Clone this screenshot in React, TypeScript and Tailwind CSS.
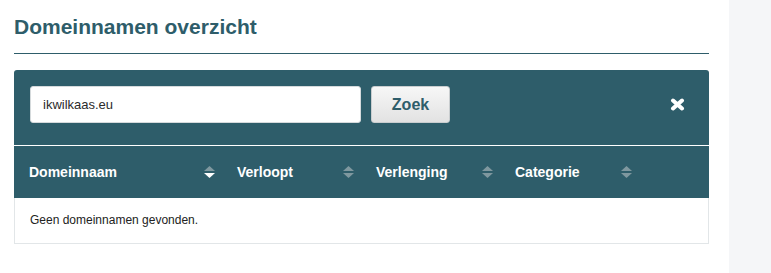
import React from "react";

function SortIcon({ active }: { active?: boolean }) {
  return (
    <svg width="11" height="12" viewBox="0 0 11 12" className="shrink-0">
      <polygon points="5.5,0 11,5 0,5" fill="#7f989f" />
      <polygon points="0,7 11,7 5.5,12" fill={active ? "#ffffff" : "#7f989f"} />
    </svg>
  );
}

export default function App() {
  const cols = [
    { label: "Domeinnaam", active: true },
    { label: "Verloopt" },
    { label: "Verlenging" },
    { label: "Categorie" },
  ];
  return (
    <div
      className="flex min-h-screen w-full bg-white"
      style={{ fontFamily: '"Liberation Sans", Arial, sans-serif' }}
    >
      <div className="w-[729px] shrink-0 pl-[14px] pr-[20px]">
        <h1 className="mt-[15px] text-[21px] font-bold leading-[24px] text-[#2e5d6a]">
          Domeinnamen overzicht
        </h1>
        <div className="mt-[14px] h-px bg-[#2e5d6a]" />
        <div className="mt-[16px] rounded-t-[3px] bg-[#2e5d6a]">
          <div className="flex items-center pl-[16px] pr-[24px] pt-[16px] pb-[22px]">
            <div className="flex h-[37px] w-[331px] items-center rounded-[3px] border border-[#d5dadc] bg-white pl-[12px] text-[13px] text-[#2b2b2b]">
              ikwilkaas.eu
            </div>
            <button className="ml-[10px] flex h-[37px] w-[79px] items-center justify-center rounded-[3px] border border-[#c9cdcf] bg-gradient-to-b from-[#f7f7f7] to-[#e2e2e2] text-[16px] font-bold text-[#2e5d6a]">
              Zoek
            </button>
            <div className="flex-1" />
            <svg width="15" height="13" viewBox="0 0 15 13">
              <path
                d="M3 2.5 L12 10.5 M12 2.5 L3 10.5"
                stroke="#ffffff"
                strokeWidth="4"
                strokeLinecap="round"
              />
            </svg>
          </div>
          <div className="h-px bg-white" />
          <div className="grid h-[52px] grid-cols-[208px_139px_139px_139px_1fr] items-center">
            {cols.map((c) => (
              <div
                key={c.label}
                className="flex items-center justify-between pl-[15px] pr-[7px] text-[14px] font-bold text-white"
              >
                <span>{c.label}</span>
                <SortIcon active={c.active} />
              </div>
            ))}
            <div />
          </div>
        </div>
        <div className="border-x border-b border-[#e2e6e8] bg-white pt-[15px] pb-[16px] pl-[15px] text-[12px] leading-[14px] text-[#222]">
          Geen domeinnamen gevonden.
        </div>
      </div>
      <div className="flex-1 bg-[#f5f6f8]" />
    </div>
  );
}
